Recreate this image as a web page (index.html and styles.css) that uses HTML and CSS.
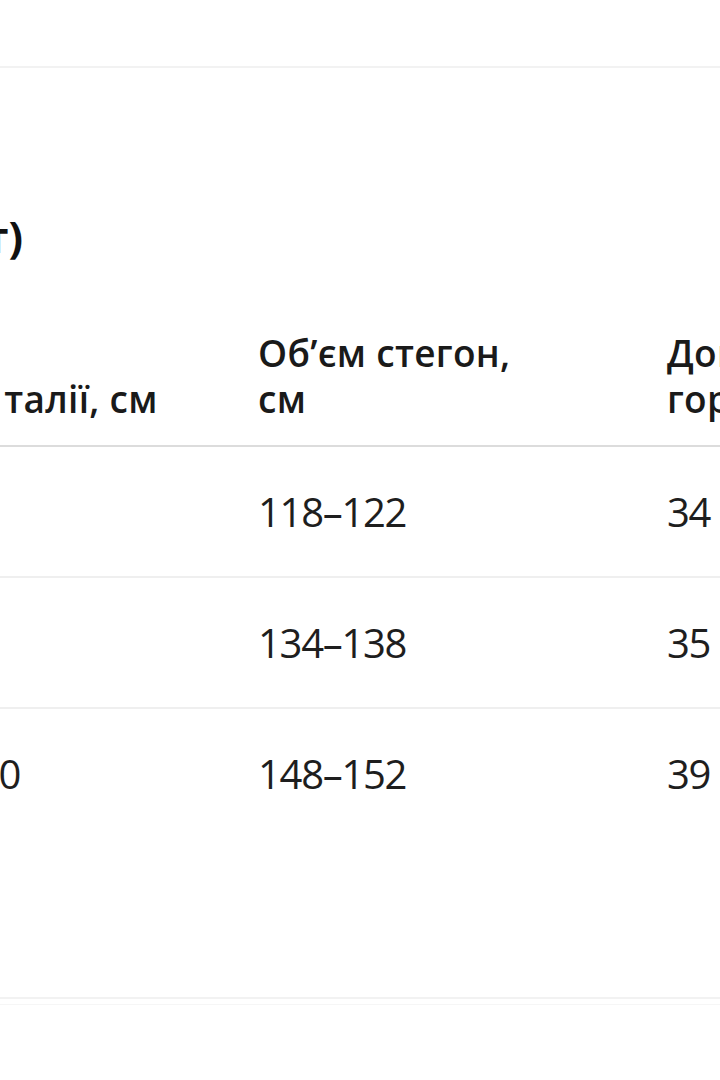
FILE: index.html
```html
<!DOCTYPE html>
<html lang="uk">
<head>
<meta charset="utf-8">
<title>Розмірна сітка</title>
<link rel="stylesheet" href="styles.css">
</head>
<body>
<div class="page">
  <div class="topbar"></div>
  <div class="title-wrap">
    <h2 class="title">Таблиця розмірів (пальто, жакет)</h2>
  </div>
  <table class="sizes">
    <colgroup>
      <col class="c1"><col class="c2"><col class="c3">
    </colgroup>
    <thead>
      <tr>
        <th class="first"><div class="head">Об’єм талії, см</div></th>
        <th><div class="head narrow">Об’єм стегон, см</div></th>
        <th><div class="head">Довжина горловини, см</div></th>
      </tr>
    </thead>
    <tbody>
      <tr><td>86–90</td><td>118–122</td><td>34</td></tr>
      <tr><td>94–98</td><td>134–138</td><td>35</td></tr>
      <tr><td>116–120</td><td>148–152</td><td>39</td></tr>
    </tbody>
  </table>
  <div class="footer-line"></div>
</div>
</body>
</html>
```

FILE: styles.css
```css
html, body {
  margin: 0;
  padding: 0;
  overflow: hidden;
  background: #ffffff;
}
body {
  font-family: "Open Sans", "Noto Sans", sans-serif;
  color: #1e1e1e;
}
.page {
  width: 720px;
  height: 1080px;
  overflow: hidden;
}
.topbar {
  height: 66px;
  border-bottom: 2px solid #f2f2f2;
}
.title-wrap {
  display: flex;
  justify-content: flex-end;
  width: 23px;
  margin-top: 140px;
}
.title {
  margin: 0;
  flex: none;
  white-space: nowrap;
  font-size: 43px;
  line-height: 58px;
  font-weight: 700;
  color: #111111;
}
.sizes {
  margin-top: 64px;
  margin-left: -128px;
  border-collapse: collapse;
  table-layout: fixed;
  width: 1100px;
}
.c1 { width: 386px; }
.c2 { width: 409px; }
.c3 { width: 305px; }
.sizes th {
  text-align: left;
  vertical-align: bottom;
  font-size: 37px;
  letter-spacing: 0.3px;
  line-height: 46px;
  font-weight: 600;
  padding: 0 0 23px 0;
  border-bottom: 2px solid #dcdcdc;
  color: #1a1a1a;
}
.sizes th.first {
  padding-left: 14px;
}
.head {
  max-width: 300px;
}
.head.narrow {
  max-width: 290px;
}
.sizes td {
  height: 129px;
  padding: 0;
  vertical-align: middle;
  font-size: 40px;
  letter-spacing: -1.3px;
  font-weight: 400;
  border-bottom: 2px solid #efefef;
  white-space: nowrap;
}
.sizes tbody tr:last-child td {
  border-bottom: none;
}
.footer-line {
  margin-top: 159px;
  height: 5px;
  border-top: 2px solid #f2f2f2;
  border-bottom: 1px solid #f6f6f6;
}
```
